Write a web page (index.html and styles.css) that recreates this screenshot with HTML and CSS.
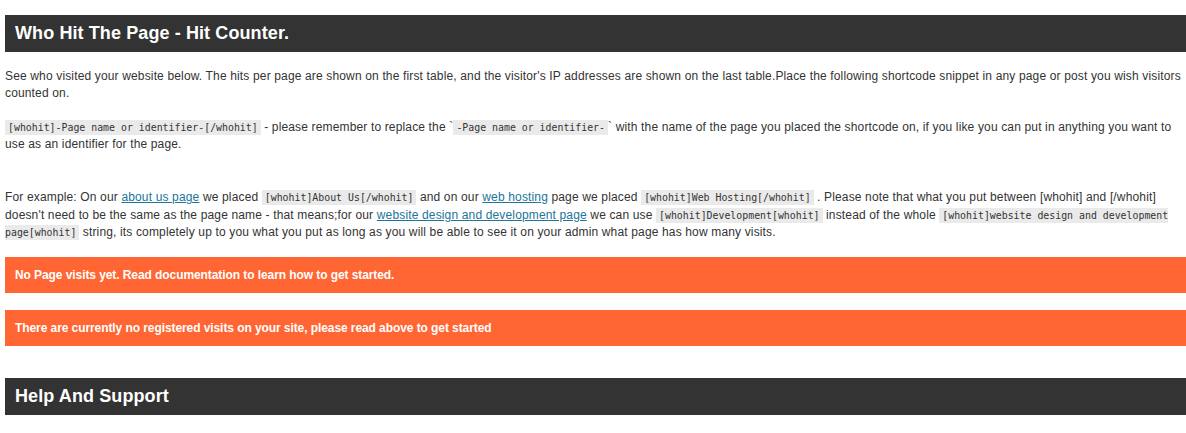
FILE: index.html
```html
<!DOCTYPE html>
<html>
<head>
<meta charset="utf-8">
<link rel="stylesheet" href="styles.css">
</head>
<body>
<div class="wrap">
  <h2 class="bar-head">Who Hit The Page - Hit Counter.</h2>
  <p class="txt first">See who visited your website below. The hits per page are shown on the first table, and the visitor's IP addresses are shown on the last table.Place the following shortcode snippet in any page or post you wish visitors counted on.</p>
  <p class="txt second"><code>[whohit]-Page name or identifier-[/whohit]</code> - please remember to replace the `<code>-Page name or identifier-</code>` with the name of the page you placed the shortcode on, if you like you can put in anything you want to use as an identifier for the page.</p>
  <p class="txt gap">For example: On our <a href="#">about us page</a> we placed <code>[whohit]About Us[/whohit]</code> and on our <a href="#">web hosting</a> page we placed <code>[whohit]Web Hosting[/whohit]</code> . Please note that what you put between [whohit] and [/whohit] doesn't need to be the same as the page name - that means;for our <a href="#">website design and development page</a> we can use <code>[whohit]Development[whohit]</code> instead of the whole <code>[whohit]website design and development page[whohit]</code> string, its completely up to you what you put as long as you will be able to see it on your admin what page has how many visits.</p>
  <div class="notice n1">No Page visits yet. Read documentation to learn how to get started.</div>
  <div class="notice">There are currently no registered visits on your site, please read above to get started</div>
  <h2 class="bar-head help">Help And Support</h2>
</div>
</body>
</html>
```
FILE: styles.css
```css
html, body { margin: 0; padding: 0; background: #fff; }
body { font-family: "Liberation Sans", Arial, sans-serif; color: #333; }
.wrap { padding: 15px 0 0 5px; }
.bar-head {
  margin: 0;
  background: #333;
  color: #fff;
  font-size: 18px;
  font-weight: bold;
  letter-spacing: 0.1px;
  height: 37px;
  line-height: 37px;
  padding: 0 10px;
}
.txt {
  font-size: 12px;
  line-height: 17px;
  letter-spacing: 0.15px;
  margin: 0;
}
.txt.first { margin-top: 16px; }
.txt.second { margin-top: 17px; }
.txt.gap { margin-top: 36px; line-height: 17.5px; }
.txt a { color: #21759b; }
code {
  font-family: "DejaVu Sans Mono", monospace;
  font-size: 9.9px;
  letter-spacing: 0;
  background: #eaeaea;
  padding: 2px 3px;
  margin: 0;
}
.notice {
  background: #ff6633;
  color: #fff;
  font-size: 12px;
  font-weight: bold;
  letter-spacing: -0.08px;
  height: 36px;
  line-height: 36px;
  padding: 0 10px;
  margin-top: 17px;
}
.notice.n1 { margin-top: 15px; }
.help { margin-top: 32px; }
```
